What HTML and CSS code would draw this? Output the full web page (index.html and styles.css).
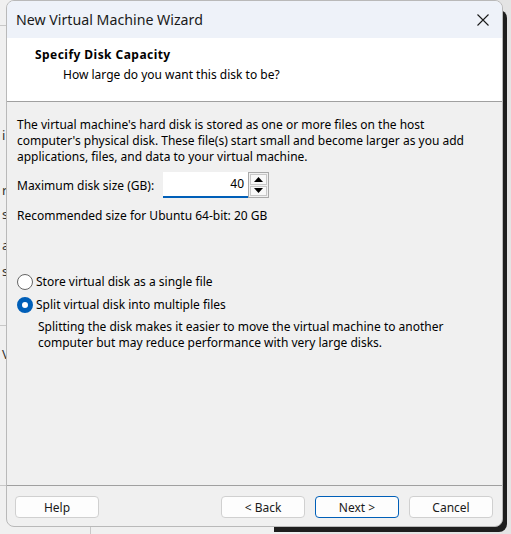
FILE: index.html
```html
<!DOCTYPE html>
<html>
<head>
<meta charset="utf-8">
<link rel="stylesheet" href="styles.css">
</head>
<body>
<div class="desktop">
  <div class="bgwin">
    <div class="bg-line top"></div>
    <div class="bg-text t1">i</div>
    <div class="bg-text t2">r</div>
    <div class="bg-text t3">a</div>
    <div class="bg-text t4">s</div>
    <div class="bg-text t5">s</div>
    <div class="bg-line mid"></div>
    <div class="bg-text t6">V</div>
    <div class="bg-line bot"></div>
    <div class="bg-vline"></div>
  </div>
  <div class="darkwin"></div>
  <div class="dialog">
    <div class="titlebar">
      <span class="title">New Virtual Machine Wizard</span>
      <svg class="close" width="12" height="12" viewBox="0 0 12 12"><path d="M0.5 0.5 L11.5 11.5 M11.5 0.5 L0.5 11.5" stroke="#1a1a1a" stroke-width="1.1" fill="none"/></svg>
    </div>
    <div class="header">
      <div class="h-title">Specify Disk Capacity</div>
      <div class="h-sub">How large do you want this disk to be?</div>
    </div>
    <div class="content">
      <p class="intro">The virtual machine's hard disk is stored as one or more files on the host computer's physical disk. These file(s) start small and become larger as you add applications, files, and data to your virtual machine.</p>
      <div class="size-row">
        <span class="label">Maximum disk size (GB):</span>
        <div class="spin">
          <div class="field">40</div>
          <div class="arrows">
            <div class="arrow"><svg width="9" height="5" viewBox="0 0 9 5"><path d="M0 5 L4.5 0 L9 5 Z" fill="#000"/></svg></div>
            <div class="arrow"><svg width="9" height="5" viewBox="0 0 9 5"><path d="M0 0 L4.5 5 L9 0 Z" fill="#000"/></svg></div>
          </div>
        </div>
      </div>
      <p class="rec">Recommended size for Ubuntu 64-bit: 20 GB</p>
      <div class="options">
        <div class="radio"><span class="dot"></span><span>Store virtual disk as a single file</span></div>
        <div class="radio checked"><span class="dot"></span><span>Split virtual disk into multiple files</span></div>
        <p class="desc">Splitting the disk makes it easier to move the virtual machine to another computer but may reduce performance with very large disks.</p>
      </div>
    </div>
    <div class="footer">
      <div class="btn">Help</div>
      <div class="spacer"></div>
      <div class="btn">&lt; Back</div>
      <div class="btn default">Next &gt;</div>
      <div class="btn">Cancel</div>
    </div>
  </div>
</div>
</body>
</html>
```
FILE: styles.css
```css
html, body {
  margin: 0;
  padding: 0;
}
body {
  width: 511px;
  height: 534px;
  overflow: hidden;
  background: #e4e4e4;
  font-family: "Noto Sans", "Open Sans", sans-serif;
  font-size: 12px;
  color: #000;
}
.desktop {
  position: relative;
  width: 511px;
  height: 534px;
}
.bgwin {
  position: absolute;
  left: 0;
  top: 0;
  width: 300px;
  height: 534px;
  background: #f0f0f0;
}
.bg-line {
  position: absolute;
  left: 0;
  height: 1px;
  width: 30px;
  background: #c8c8c8;
}
.bg-line.top { top: 25px; }
.bg-line.mid { top: 325px; }
.bg-line.bot { top: 485px; }
.bg-vline {
  position: absolute;
  left: 90px;
  top: 520px;
  width: 1px;
  height: 14px;
  background: #c8c8c8;
}
.bg-text {
  position: absolute;
  left: 2px;
  font-size: 13px;
  color: #333;
}
.t1 { top: 126px; }
.t2 { top: 181px; }
.t3 { top: 236px; }
.t4 { top: 205px; }
.t5 { top: 262px; }
.t6 { top: 345px; }
.darkwin {
  position: absolute;
  left: 274px;
  top: 10px;
  width: 233px;
  height: 522px;
  background: #1e1e1e;
  border-radius: 0 8px 8px 0;
}
.dialog {
  position: absolute;
  left: 6px;
  top: 0;
  width: 495px;
  height: 525px;
  border: 1px solid #b9b9b9;
  border-radius: 8px;
  background: #f0f0f0;
  display: flex;
  flex-direction: column;
  overflow: hidden;
}
.titlebar {
  height: 37px;
  flex: none;
  background: #eef2f9;
  display: flex;
  align-items: center;
  padding: 0 13px 0 9px;
}
.title {
  flex: 1;
  font-size: 14.2px;
  color: #1a1a1a;
  padding-bottom: 1px;
}
.header {
  height: 64px;
  flex: none;
  background: #fff;
  border-bottom: 1px solid #a0a0a0;
  padding: 8px 0 0 28px;
  box-sizing: border-box;
}
.h-title {
  font-weight: bold;
  line-height: 18px;
  letter-spacing: 0.45px;
}
.h-sub {
  margin: 2px 0 0 28px;
  line-height: 18px;
}
.content {
  flex: 1;
  padding: 15px 10px 0 10px;
}
p {
  margin: 0;
}
.intro {
  line-height: 16px;
  width: 460px;
}
.size-row {
  display: flex;
  align-items: center;
  margin-top: 7px;
}
.label {
  width: 146px;
}
.spin {
  display: flex;
  height: 26px;
}
.field {
  width: 85px;
  box-sizing: border-box;
  background: #fff;
  border-bottom: 2px solid #005fb8;
  text-align: right;
  padding: 3px 4px 0 0;
}
.arrows {
  width: 21px;
  box-sizing: border-box;
  border: 1px solid #a9a9a9;
  display: flex;
  flex-direction: column;
  padding: 1px;
  gap: 1px;
  background: #f0f0f0;
}
.arrow {
  flex: 1;
  display: flex;
  align-items: center;
  justify-content: center;
  background: #f8f8f8;
  border: 1px solid #c8c8c8;
}
.rec {
  margin-top: 10px;
  line-height: 16px;
}
.options {
  margin-top: 46px;
}
.radio {
  display: flex;
  align-items: center;
  height: 23px;
  gap: 3px;
}
.dot {
  width: 14px;
  height: 14px;
  border: 1px solid #666;
  border-radius: 50%;
  background: #fff;
  flex: none;
}
.radio.checked .dot {
  width: 6px;
  height: 6px;
  border: 5px solid #005fb8;
  background: #fff;
}
.desc {
  margin: 3px 0 0 21px;
  line-height: 16px;
}
.footer {
  flex: none;
  height: 41px;
  border-top: 1px solid #a0a0a0;
  box-sizing: border-box;
  display: flex;
  align-items: flex-start;
  padding: 10px 9px 0 8px;
  gap: 10px;
}
.spacer {
  flex: 1;
}
.btn {
  width: 84px;
  height: 22px;
  box-sizing: border-box;
  border: 1px solid #d0d0d0;
  border-radius: 4px;
  background: #fdfdfd;
  display: flex;
  align-items: center;
  justify-content: center;
  color: #1a1a1a;
}
.btn.default {
  border-color: #005fb8;
}
```
